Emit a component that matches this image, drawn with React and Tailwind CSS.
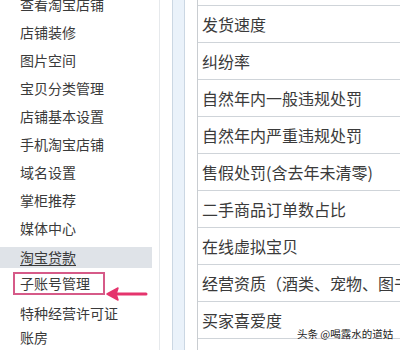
const menu = ['查看淘宝店铺', '店铺装修', '图片空间', '宝贝分类管理', '店铺基本设置', '手机淘宝店铺', '域名设置', '掌柜推荐', '媒体中心']

const rows = ['', '发货速度', '纠纷率', '自然年内一般违规处罚', '自然年内严重违规处罚', '售假处罚(含去年未清零)', '二手商品订单数占比', '在线虚拟宝贝', '经营资质（酒类、宠物、图书', '买家喜爱度']

export default function App() {
  return (
    <div
      className="relative w-[400px] h-[350px] overflow-hidden bg-white flex text-[#3a3a3a]"
      style={{ fontFamily: '"Noto Sans CJK SC", "Liberation Sans", sans-serif' }}
    >
      {/* left menu */}
      <div className="w-[160px] shrink-0 border-r border-[#e6e9ec] flex flex-col text-[14px]">
        <div className="mt-[-10px] flex flex-col">
          {menu.map((m) => (
            <div key={m} className="h-[28px] flex items-center pl-5 whitespace-nowrap">{m}</div>
          ))}
        </div>
        <div className="mt-[5px] h-[24px] w-[152px] bg-[#dfe3e8] flex items-center pl-5 underline underline-offset-2">淘宝贷款</div>
        <div className="mt-[4px] ml-[13px] h-[23px] w-[92px] border-2 border-[#d65a88] flex items-center pl-[5px]">子账号管理</div>
        <div className="mt-[6px] h-[28px] flex items-center pl-5">特种经营许可证</div>
        <div className="h-[28px] flex items-center pl-5">账房</div>
      </div>

      {/* splitter */}
      <div className="w-[12px] shrink-0" />
      <div className="w-[13px] shrink-0 bg-[#eaf2fa] border-x border-[#cbd7e3]" />
      <div className="w-[12px] shrink-0" />

      {/* table */}
      <div className="flex-1 border-l border-[#c9cdd1] text-[16px]">
        <div className="mt-[-31px] flex flex-col">
          {rows.map((r, i) => (
            <div key={i} className="h-[37px] border-b border-[#cfd4d9] flex items-center pl-1 whitespace-nowrap">{r}</div>
          ))}
        </div>
      </div>

      {/* arrow */}
      <svg className="absolute left-[104px] top-[285px]" width="44" height="18" viewBox="0 0 44 18">
        <line x1="42" y1="9" x2="10" y2="9" stroke="#e5346d" strokeWidth="3" strokeLinecap="round" />
        <path d="M3 9 L14 3 L12 9 L14 15 Z" fill="#e5346d" stroke="#e5346d" strokeWidth="1.5" strokeLinejoin="round" />
      </svg>

      {/* watermark */}
      <div className="absolute left-[297px] top-[326px] text-[10.5px] text-[#222] whitespace-nowrap [text-shadow:0_0_2px_#fff]">头条 @喝露水的道姑</div>
    </div>
  )
}
